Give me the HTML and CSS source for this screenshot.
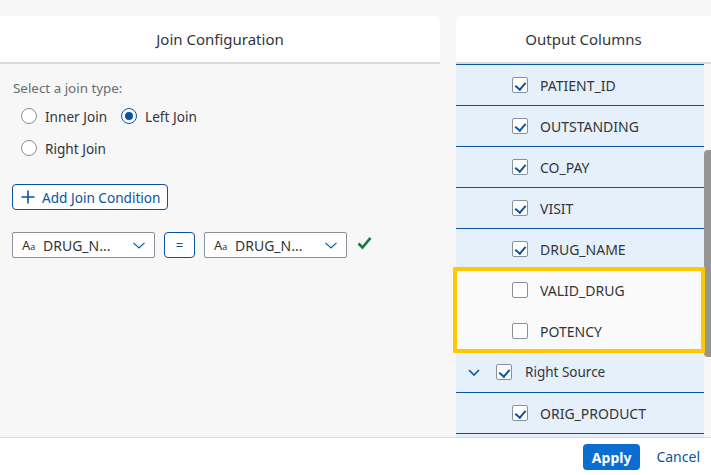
FILE: index.html
```html
<!DOCTYPE html>
<html>
<head>
<meta charset="utf-8">
<link rel="stylesheet" href="styles.css">
</head>
<body>
<div class="main">
  <section class="left">
    <div class="panel-head left-head">Join Configuration</div>
    <div class="left-body">
      <div class="label">Select a join type:</div>
      <div class="radio-row">
        <label class="radio"><span class="circle"></span><span>Inner Join</span></label>
        <label class="radio"><span class="circle on"></span><span>Left Join</span></label>
      </div>
      <div class="radio-row">
        <label class="radio"><span class="circle"></span><span>Right Join</span></label>
      </div>
      <button class="add-btn"><svg class="plus" width="14" height="14" viewBox="0 0 14 14"><path d="M7 0.5V13.5M0.5 7H13.5" stroke="#0854a0" stroke-width="1.6" fill="none"/></svg><span>Add Join Condition</span></button>
      <div class="cond">
        <div class="select"><span class="aa">A<span class="aa-s">a</span></span><span class="sel-text">DRUG_N...</span><svg class="chev" width="12" height="7" viewBox="0 0 12 7"><path d="M0.5 0.8L6 6L11.5 0.8" stroke="#0854a0" stroke-width="1.1" fill="none"/></svg></div>
        <button class="eq">=</button>
        <div class="select"><span class="aa">A<span class="aa-s">a</span></span><span class="sel-text">DRUG_N...</span><svg class="chev" width="12" height="7" viewBox="0 0 12 7"><path d="M0.5 0.8L6 6L11.5 0.8" stroke="#0854a0" stroke-width="1.1" fill="none"/></svg></div>
        <svg class="ok" width="15" height="14" viewBox="0 0 15 14"><path d="M1.5 7.5L5.5 11.5L13.5 1.8" stroke="#107e3e" stroke-width="2.6" fill="none"/></svg>
      </div>
    </div>
  </section>
  <section class="right">
    <div class="panel-head right-head">Output Columns</div>
    <div class="list-area">
      <div class="list">
        <div class="row sel"><span class="cb on"></span><span>PATIENT_ID</span></div>
        <div class="row sel"><span class="cb on"></span><span>OUTSTANDING</span></div>
        <div class="row sel"><span class="cb on"></span><span>CO_PAY</span></div>
        <div class="row sel"><span class="cb on"></span><span>VISIT</span></div>
        <div class="row sel"><span class="cb on"></span><span>DRUG_NAME</span></div>
        <div class="row plain"><span class="cb"></span><span>VALID_DRUG</span></div>
        <div class="row plain"><span class="cb"></span><span>POTENCY</span></div>
        <div class="row sel group"><svg class="gchev" width="12" height="7" viewBox="0 0 12 7"><path d="M1 1L6 6L11 1" stroke="#0854a0" stroke-width="1.6" fill="none"/></svg><span class="cb on"></span><span class="gtext">Right Source</span></div>
        <div class="row sel"><span class="cb on"></span><span>ORIG_PRODUCT</span></div>
        <div class="row sel"></div>
        <div class="highlight"></div>
      </div>
      <div class="scroll"><div class="thumb"></div></div>
    </div>
  </section>
</div>
<footer class="footer">
  <button class="apply">Apply</button>
  <button class="cancel">Cancel</button>
</footer>
</body>
</html>
```

FILE: styles.css
```css
* { box-sizing: border-box; }
html, body { margin: 0; padding: 0; }
body {
  width: 711px;
  height: 475px;
  overflow: hidden;
  background: #f7f7f7;
  font-family: "Noto Sans", "Liberation Sans", sans-serif;
  color: #32363a;
  display: flex;
  flex-direction: column;
}
button { font-family: inherit; cursor: pointer; }
.main {
  display: flex;
  gap: 16px;
  padding-top: 16px;
  height: 437px;
  overflow: hidden;
  flex: none;
}
.left { width: 440px; display: flex; flex-direction: column; }
.right { flex: 1; display: flex; flex-direction: column; min-width: 0; }
.panel-head {
  height: 48px;
  background: #fff;
  border-bottom: 2px solid #d9d9d9;
  text-align: center;
  font-size: 15px;
  line-height: 46px;
  color: #32363a;
}
.left-head { border-top-right-radius: 6px; }
.right-head { border-top-left-radius: 6px; }
.left-body { padding: 15px 12px 0 13px; }
.label { font-size: 13.4px; line-height: 18px; color: #6a6d70; }
.radio-row { display: flex; gap: 14px; height: 32px; align-items: center; padding-left: 8px; }
.label + .radio-row { margin-top: 3px; }
.radio { display: flex; align-items: center; gap: 8px; font-size: 13.6px; color: #32363a; }
.circle {
  width: 16px; height: 16px; border-radius: 50%;
  border: 1px solid #89919a; background: #fff;
  display: flex; align-items: center; justify-content: center;
}
.circle.on { border-color: #0854a0; }
.circle.on::after { content: ""; width: 8px; height: 8px; border-radius: 50%; background: #0854a0; }
.add-btn {
  margin-top: 20px;
  margin-left: -1px;
  height: 26px;
  display: flex; align-items: center; gap: 7px;
  padding: 0 7px 0 8px;
  background: #fff;
  border: 1px solid #0854a0;
  border-radius: 4px;
  color: #0854a0;
  font-size: 13.6px;
}
.cond { display: flex; align-items: center; margin-top: 22px; margin-left: -1px; }
.select {
  width: 143px; height: 26px;
  background: #fff;
  border: 1px solid #89919a;
  border-radius: 2px;
  display: flex; align-items: center;
  padding: 0 9px 0 9px;
  font-size: 14px;
  color: #32363a;
}
.aa { font-size: 13px; width: 14px; margin-right: 7px; }
.aa-s { font-size: 9px; }
.sel-text { flex: 1; }
.eq {
  margin: 0 9px;
  width: 31px; height: 26px;
  border: 1px solid #0854a0; border-radius: 4px;
  background: #fff; color: #0854a0; font-size: 13px; padding: 0;
}
.ok { margin-left: 10px; margin-top: -4px; }
.list-area { flex: 1; display: flex; min-height: 0; }
.list {
  position: relative;
  width: 248px;
  border-top: 1px solid #0854a0;
}
.row {
  height: 41px;
  display: flex; align-items: center;
  padding-left: 56px;
  gap: 12px;
  font-size: 14px;
  color: #32363a;
  border-bottom: 1px solid transparent;
}
.row.sel { background: #e5f0fa; border-bottom-color: #0854a0; }
.row.plain { background: #fafafa; }
.row.group { padding-left: 12px; gap: 0; font-size: 13.5px; }
.gchev { margin-right: 16px; }
.gtext { margin-left: 13px; }
.cb {
  width: 16px; height: 16px; flex: none;
  border: 1px solid #89919a; border-radius: 2px; background: #fff;
  position: relative;
}
.cb.on::after {
  content: "";
  position: absolute;
  left: 4px; top: 2px;
  width: 5px; height: 8px;
  border-right: 2px solid #0854a0;
  border-bottom: 2px solid #0854a0;
  transform: rotate(40deg);
}
.highlight {
  position: absolute;
  left: -3px; top: 202px;
  width: 252px; height: 86px;
  border: 4px solid #ffc800;
  pointer-events: none;
}
.scroll { width: 7px; }
.thumb {
  margin-top: 86px;
  height: 207px;
  background: #959595;
  border-radius: 4px 0 0 4px;
}
.footer {
  height: 38px;
  flex: none;
  background: #fff;
  border-top: 1px solid #d9d9d9;
  display: flex; align-items: center; justify-content: flex-end;
  padding-right: 3px;
  gap: 8px;
}
.apply {
  height: 26px;
  background: #0a6ed1; color: #fff;
  border: none; border-radius: 4px;
  font-weight: bold; font-size: 14px;
  padding: 0 9px;
  margin-top: 1px;
}
.cancel {
  background: none; border: none;
  color: #0854a0; font-size: 14px;
  padding: 0 8px;
  height: 26px;
}
```
